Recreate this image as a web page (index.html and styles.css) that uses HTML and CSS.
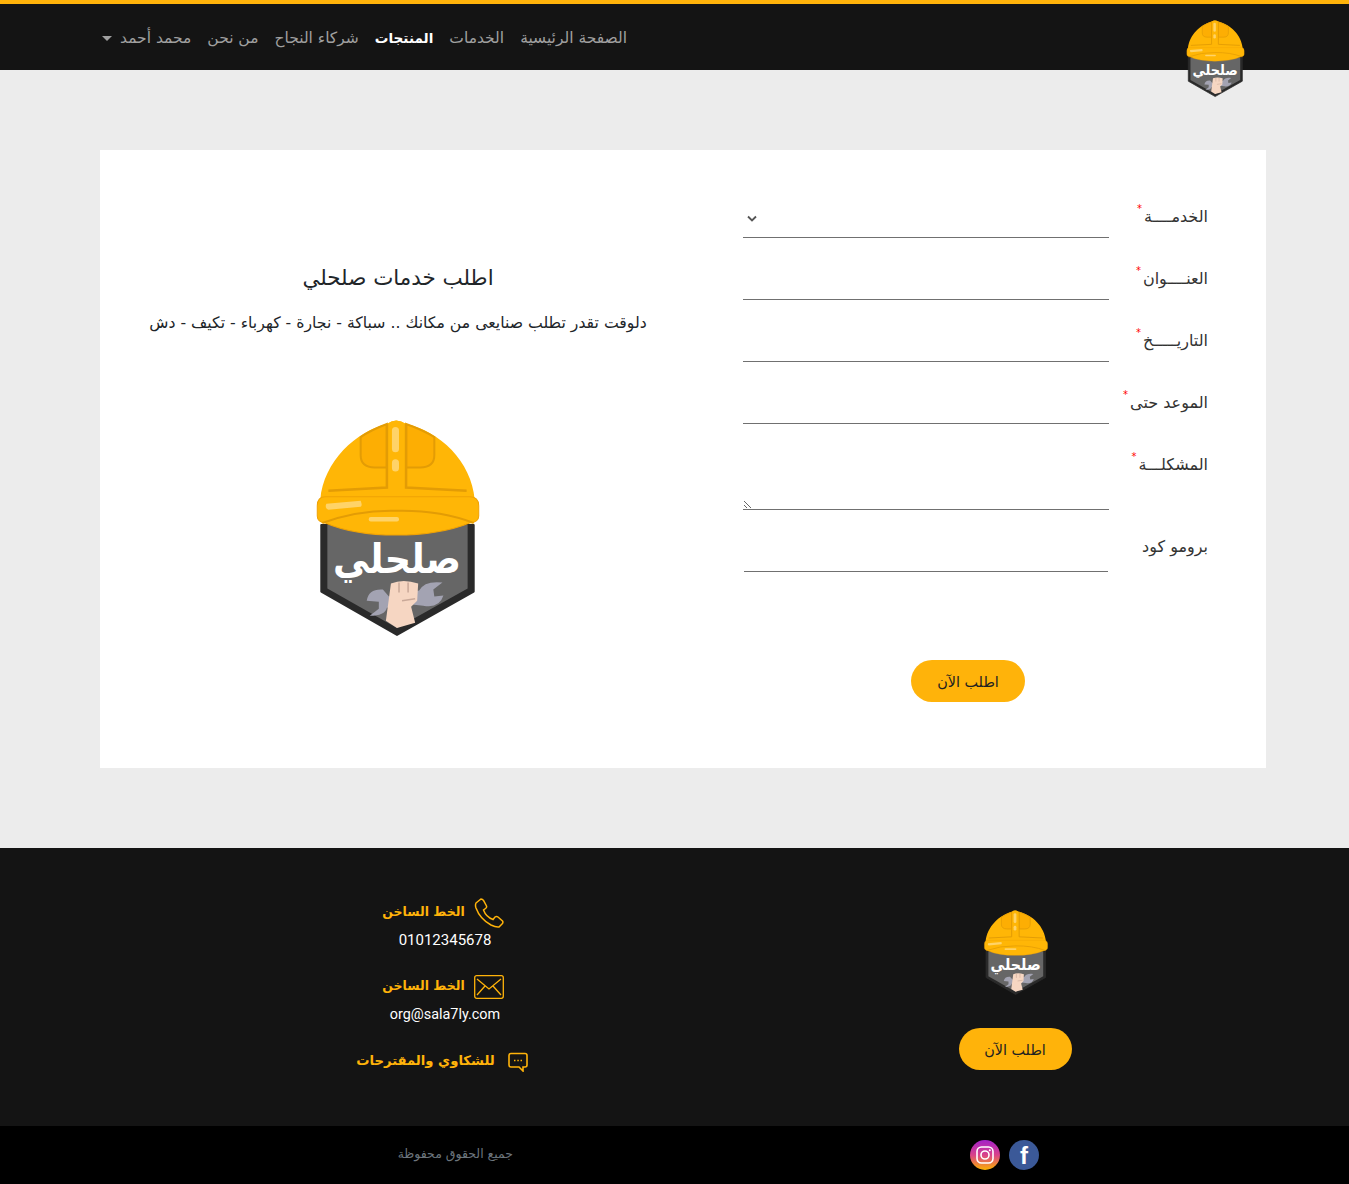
FILE: index.html
```html
<!DOCTYPE html>
<html lang="ar" dir="rtl">
	<head>
		<meta charset="UTF-8">
		<title>صلحلي</title>
		<link rel="stylesheet" href="styles.css">
	</head>
	<body>
		<svg class="defs" width="0" height="0">
			<defs>
				<linearGradient id="insta" x1="0" y1="0" x2="0" y2="1">
					<stop offset="0" stop-color="#a322c9"/>
					<stop offset="0.5" stop-color="#d9418a"/>
					<stop offset="1" stop-color="#fbb200"/>
				</linearGradient>
				<symbol id="logo" viewBox="17 10 164 218">
					<path d="M23 115 L174 115 L174 181 L98 224 L23 181 Z" fill="#2a2a2a" stroke="#2a2a2a" stroke-width="2" stroke-linejoin="round"/>
					<path d="M29 115 L168 115 L168 178 L98 217 L29 178 Z" fill="#666"/>
					<path d="M22 90 C25 52 58 22 88 15 Q97 8 107 15 C140 22 172 52 175 90 Z" fill="#ffb606"/>
					<path d="M62 28 Q72 21 88 15 L88 58 L76 58 Q62 58 62 46 Z" fill="#fdae03" stroke="#e39c05" stroke-width="2"/>
					<path d="M135 28 Q124 21 107 15 L107 58 L121 58 Q135 58 135 46 Z" fill="#fdae03" stroke="#e39c05" stroke-width="2"/>
					<path d="M88 15 L88 78 L30 80 L25 88 L170 88 L167 80 L107 78 L107 15 Q97 8 88 15 Z" fill="#ffb606"/>
					<path d="M88 15 L88 78 L30 81 M107 15 L107 78 L167 81" fill="none" stroke="#e39c05" stroke-width="2.500"/>
					<rect x="93" y="18" width="7" height="25" rx="3.500" fill="#ffd368"/>
					<rect x="93" y="50" width="7" height="12" rx="3.500" fill="#ffd368"/>
					<path d="M19 96 Q19 87 27 87 L170 87 Q179 87 179 96 L179 106 Q179 112 170 113 Q140 125 97 125 Q55 125 27 113 Q19 112 19 106 Z" fill="#ffb606" stroke="#f0a204" stroke-width="1"/>
					<path d="M24 113 Q60 100 97 101 Q140 100 174 113" fill="none" stroke="#e39c05" stroke-width="2"/>
					<path d="M28 94 L62 91 Q64 96 62 97 L30 100 Q26 98 28 94 Z" fill="#ffd368"/>
					<rect x="70" y="107" width="30" height="4.500" rx="2" fill="#ffd368"/>
					<text class="logo-text" x="98" y="163" textLength="127" lengthAdjust="spacingAndGlyphs">صلحلي</text>
					<path d="M68 190 Q70 178 84 179 L90 186 L110 182 L120 180 Q125 170 143 172 L134 179 L135 186 L144 185 Q140 198 124 195 L106 193 L88 197 Q86 205 71 205 L80 198 L80 191 Z" fill="#a3a3b2"/>
					<path d="M92 173 Q104 168 119 173 L118 190 L112 196 L116 212 L98 217 L87 210 Z" fill="#f6d6c2"/>
					<path d="M100 172 L100 182 M109 172 L109 182 M103 190 L116 188" stroke="#c9a898" stroke-width="1.500" fill="none"/>
				</symbol>
			</defs>
		</svg>

		<header class="topbar">
			<svg class="topbar-logo"><use href="#logo"/></svg>
			<ul class="nav">
				<li>الصفحة الرئيسية</li>
				<li>الخدمات</li>
				<li class="active">المنتجات</li>
				<li>شركاء النجاح</li>
				<li>من نحن</li>
				<li class="dropdown">محمد أحمد</li>
			</ul>
		</header>

		<main class="page">
			<section class="card">
				<form class="order-form">
					<div class="row">
						<label>الخدمــــة<span class="req">*</span></label>
						<div class="field select"><svg class="chevron" width="10" height="7" viewBox="0 0 10 7"><path d="M1 1.500 L5 5.500 L9 1.500" fill="none" stroke="#555" stroke-width="1.800"/></svg></div>
					</div>
					<div class="row">
						<label>العنــــوان<span class="req">*</span></label>
						<input class="field" type="text">
					</div>
					<div class="row">
						<label>التاريـــــخ<span class="req">*</span></label>
						<input class="field" type="text">
					</div>
					<div class="row">
						<label>الموعد حتى<span class="req">*</span></label>
						<input class="field" type="text">
					</div>
					<div class="row">
						<label>المشكلـــة<span class="req">*</span></label>
						<textarea class="field area"></textarea>
					</div>
					<div class="row promo">
						<label>برومو كود</label>
						<input class="field" type="text">
					</div>
					<button type="button" class="btn form-btn">اطلب الآن</button>
				</form>
				<div class="intro">
					<h1>اطلب خدمات صلحلي</h1>
					<p>دلوقت تقدر تطلب صنايعى من مكانك .. سباكة - نجارة - كهرباء - تكيف - دش</p>
					<svg class="intro-logo"><use href="#logo"/></svg>
				</div>
			</section>
		</main>

		<footer class="footer">
			<div class="footer-brand">
				<svg class="footer-logo"><use href="#logo"/></svg>
				<button type="button" class="btn">اطلب الآن</button>
			</div>
			<div class="contact">
				<div class="contact-title">
					<svg width="30" height="30" viewBox="0 0 30 30"><path d="M2 5 L7 1 Q8.500 1 9.500 2.500 L12.500 8 Q13 9.500 11.500 10.500 L9.500 12 Q12 19 19 21.500 L21 19 Q22.500 18 24 19 L28.500 23 Q29.500 24.500 28 26 L25 29 Q22 29.500 17 27 Q6 21 2 10 Q1 7 2 5 Z" fill="none" stroke="#ffb30a" stroke-width="1.500"/></svg>
					<span>الخط الساخن</span>
				</div>
				<p class="contact-value">01012345678</p>
				<div class="contact-title">
					<svg width="30" height="24" viewBox="0 0 30 24"><rect x="0.700" y="0.700" width="28.600" height="22.600" rx="2" fill="none" stroke="#ffb30a" stroke-width="1.300"/><path d="M3 4 L15 14 L27 4 M3 20 L11 11 M27 20 L19 11" fill="none" stroke="#ffb30a" stroke-width="1.300"/></svg>
					<span>الخط الساخن</span>
				</div>
				<p class="contact-value email">org@sala7ly.com</p>
				<div class="contact-title feedback">
					<svg width="20" height="20" viewBox="0 0 20 20"><path d="M3 1.500 L17 1.500 Q19 1.500 19 3.500 L19 13 Q19 15 17 15 L15 15 L15 19 L11 15 L3 15 Q1 15 1 13 L1 3.500 Q1 1.500 3 1.500 Z" fill="none" stroke="#ffb30a" stroke-width="1.600"/><path d="M6 8.500 H7.500 M9.300 8.500 H10.800 M12.500 8.500 H14" stroke="#ffb30a" stroke-width="1.600"/></svg>
					<span>للشكاوي والمقترحات</span>
				</div>
			</div>
		</footer>

		<div class="bottom">
			<div class="social">
				<span class="fb">f</span>
				<svg class="insta" width="30" height="30" viewBox="0 0 30 30"><circle cx="15" cy="15" r="15" fill="url(#insta)"/><rect x="7" y="7" width="16" height="16" rx="4.500" fill="none" stroke="#fff" stroke-width="1.600"/><circle cx="15" cy="15" r="4" fill="none" stroke="#fff" stroke-width="1.600"/><circle cx="19.800" cy="10.200" r="1" fill="#fff"/></svg>
			</div>
			<p class="rights">جميع الحقوق محفوظة</p>
		</div>
	</body>
</html>
```

FILE: styles.css
```css
*{
	margin: 0;
	padding: 0;
	box-sizing: border-box;
}
body{
	background: #ececec;
	font-family: "DejaVu Sans", "Noto Sans", sans-serif;
	font-size: 14px;
	color: #212529;
}
.defs{
	display: block;
	height: 0;
}
.logo-text{
	fill: #fff;
	font-family: "DejaVu Sans", sans-serif;
	font-weight: 700;
	font-size: 40px;
	text-anchor: middle;
}
.topbar{
	height: 70px;
	background: #141414;
	border-top: 4px solid #ffb30a;
	display: flex;
	justify-content: space-between;
	padding: 0 104px 0 102px;
}
.topbar-logo{
	width: 59px;
	height: 78px;
	margin-top: 16px;
}
.nav{
	list-style: none;
	display: flex;
	gap: 16px;
	height: 68px;
	align-items: center;
	color: #a0a0a0;
	font-size: 15.500px;
}
.nav .active{
	color: #fff;
	font-weight: 700;
	font-size: 13.600px;
}
.dropdown{
	display: flex;
	align-items: center;
	gap: 8px;
}
.dropdown::after{
	content: "";
	border-top: 5px solid #a0a0a0;
	border-left: 5px solid transparent;
	border-right: 5px solid transparent;
}
.page{
	padding: 80px 83px 80px 100px;
}
.card{
	background: #fff;
	height: 618px;
	display: grid;
	grid-template-columns: 570px 596px;
}
.order-form{
	padding: 48px 58px 0 0;
}
.row{
	display: flex;
	margin-bottom: 22px;
}
.row label{
	width: 99px;
	padding-top: 9px;
	font-size: 16px;
	color: #333;
	white-space: nowrap;
}
.req{
	color: #f00;
	font-size: 10px;
	line-height: 0;
	vertical-align: 10px;
	margin-right: 2px;
}
.field{
	display: block;
	width: 366px;
	height: 40px;
	border: 0;
	border-bottom: 1px solid #707070;
	background: none;
	font-family: inherit;
}
.select{
	display: flex;
	align-items: center;
	justify-content: flex-end;
	padding: 2px 3px 0 0;
}
.chevron{
	margin-left: 4px;
}
.area{
	height: 64px;
	resize: vertical;
	direction: rtl;
}
.promo{
	margin-bottom: 0;
}
.promo label{
	padding-top: 5px;
}
.promo .field{
	width: 364px;
	margin-right: 1px;
}
.btn{
	display: block;
	width: 114px;
	height: 42px;
	padding-top: 2px;
	border: 0;
	border-radius: 21px;
	background: #ffb30a;
	color: #212121;
	font-family: inherit;
	font-size: 14.400px;
}
.form-btn{
	margin: 88px 183px 0 0;
}
.intro{
	text-align: center;
	padding-top: 115px;
	display: flex;
	flex-direction: column;
	align-items: center;
}
.intro h1{
	font-size: 21.400px;
	font-weight: 500;
	color: #212529;
}
.intro p{
	margin-top: 23px;
	font-size: 15.700px;
}
.intro-logo{
	width: 166px;
	height: 220px;
	margin-top: 87px;
}
.footer{
	height: 278px;
	background: #141414;
	display: grid;
	grid-template-columns: 252px 890px;
	padding-right: 207px;
}
.footer-brand{
	display: flex;
	flex-direction: column;
	align-items: center;
	padding-top: 62px;
}
.footer-brand .btn{
	width: 113px;
	margin-right: 2px;
}
.footer-logo{
	width: 66px;
	height: 86px;
	margin-bottom: 32px;
}
.contact{
	display: flex;
	flex-direction: column;
	align-items: center;
	padding-top: 48px;
}
.contact-title{
	display: flex;
	align-items: center;
	gap: 9px;
	height: 30px;
	margin-right: 4px;
	color: #ffb30a;
	font-weight: 700;
	font-size: 12.500px;
}
.contact-title svg{
	margin-top: 4px;
}
.contact-value{
	color: #fff;
	font-size: 15px;
	font-family: Roboto, sans-serif;
	margin: 3px 0 19px;
	line-height: 22px;
}
.email{
	font-size: 14.400px;
	margin-top: 4px;
}
.feedback{
	gap: 13px;
	margin-right: 6px;
	font-size: 13.200px;
}
.bottom{
	height: 58px;
	background: #000;
	display: flex;
	align-items: center;
	gap: 457px;
	padding-right: 310px;
}
.social{
	display: flex;
	gap: 9px;
}
.fb{
	width: 30px;
	height: 30px;
	border-radius: 50%;
	background: #3b5998;
	color: #fff;
	font-family: "Liberation Sans", sans-serif;
	font-weight: 700;
	font-size: 24px;
	line-height: 31px;
	text-align: center;
}
.rights{
	color: #6c757d;
	font-size: 12.500px;
	margin-top: -4px;
}
```
